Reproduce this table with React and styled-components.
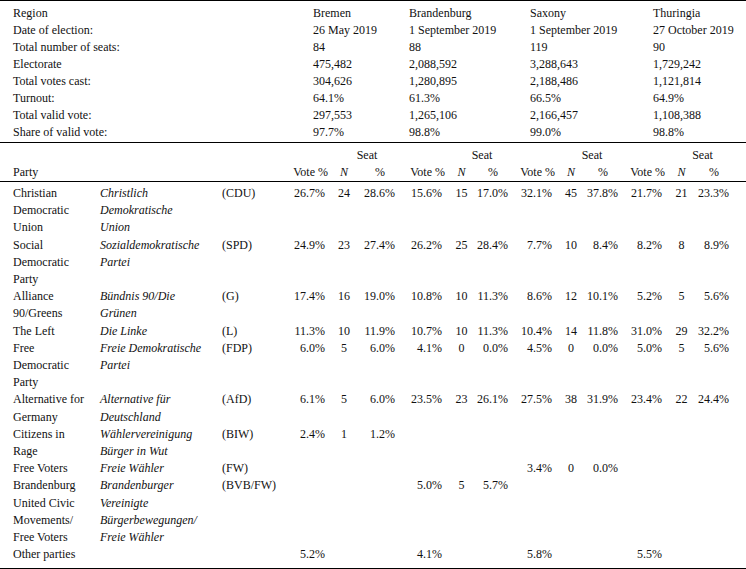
import { Fragment } from "react";
import styled, { createGlobalStyle } from "styled-components";

const GlobalStyle = createGlobalStyle`
  html, body {
    margin: 0;
    padding: 0;
    background: #fff;
  }
  body {
    font-family: "Liberation Serif", "Times New Roman", serif;
    font-size: 12px;
    color: #111;
  }
`;

const REGIONS = ["Bremen", "Brandenburg", "Saxony", "Thuringia"];

const SUMMARY = [
  ["Region", ...REGIONS],
  ["Date of election:", "26 May 2019", "1 September 2019", "1 September 2019", "27 October 2019"],
  ["Total number of seats:", "84", "88", "119", "90"],
  ["Electorate", "475,482", "2,088,592", "3,288,643", "1,729,242"],
  ["Total votes cast:", "304,626", "1,280,895", "2,188,486", "1,121,814"],
  ["Turnout:", "64.1%", "61.3%", "66.5%", "64.9%"],
  ["Total valid vote:", "297,553", "1,265,106", "2,166,457", "1,108,388"],
  ["Share of valid vote:", "97.7%", "98.8%", "99.0%", "98.8%"],
];

// each region: [vote %, seats, seat %] or null
const PARTIES = [
  {
    name: "Christian Democratic Union",
    german: "Christlich Demokratische Union",
    abbr: "(CDU)",
    results: [
      ["26.7%", "24", "28.6%"],
      ["15.6%", "15", "17.0%"],
      ["32.1%", "45", "37.8%"],
      ["21.7%", "21", "23.3%"],
    ],
  },
  {
    name: "Social Democratic Party",
    german: "Sozialdemokratische Partei",
    abbr: "(SPD)",
    results: [
      ["24.9%", "23", "27.4%"],
      ["26.2%", "25", "28.4%"],
      ["7.7%", "10", "8.4%"],
      ["8.2%", "8", "8.9%"],
    ],
  },
  {
    name: "Alliance 90/\u2060Greens",
    german: "Bündnis 90/\u2060Die Grünen",
    abbr: "(G)",
    results: [
      ["17.4%", "16", "19.0%"],
      ["10.8%", "10", "11.3%"],
      ["8.6%", "12", "10.1%"],
      ["5.2%", "5", "5.6%"],
    ],
  },
  {
    name: "The Left",
    german: "Die Linke",
    abbr: "(L)",
    results: [
      ["11.3%", "10", "11.9%"],
      ["10.7%", "10", "11.3%"],
      ["10.4%", "14", "11.8%"],
      ["31.0%", "29", "32.2%"],
    ],
  },
  {
    name: "Free Democratic Party",
    german: "Freie Demokratische Partei",
    abbr: "(FDP)",
    results: [
      ["6.0%", "5", "6.0%"],
      ["4.1%", "0", "0.0%"],
      ["4.5%", "0", "0.0%"],
      ["5.0%", "5", "5.6%"],
    ],
  },
  {
    name: "Alternative for Germany",
    german: "Alternative für Deutschland",
    abbr: "(AfD)",
    results: [
      ["6.1%", "5", "6.0%"],
      ["23.5%", "23", "26.1%"],
      ["27.5%", "38", "31.9%"],
      ["23.4%", "22", "24.4%"],
    ],
  },
  {
    name: "Citizens in Rage",
    german: "Wählervereinigung Bürger in Wut",
    abbr: "(BIW)",
    results: [["2.4%", "1", "1.2%"], null, null, null],
  },
  {
    name: "Free Voters",
    german: "Freie Wähler",
    abbr: "(FW)",
    results: [null, null, ["3.4%", "0", "0.0%"], null],
  },
  {
    name: "Brandenburg United Civic Movements/ Free Voters",
    german: "Brandenburger Vereinigte Bürgerbewegungen/ Freie Wähler",
    abbr: "(BVB/FW)",
    results: [null, ["5.0%", "5", "5.7%"], null, null],
  },
];

const OTHERS = ["5.2%", "4.1%", "5.8%", "5.5%"];

const Page = styled.div`
  width: 746px;
`;

const Summary = styled.div`
  display: grid;
  grid-template-columns: 313px 96px 121px 123px 1fr;
  border-top: 1px solid #000;
  border-bottom: 1px solid #000;
  padding: 4px 0 1px;
  line-height: 17px;
`;

const SummaryCell = styled.div`
  padding-left: ${(p) => (p.$label ? "13px" : "0")};
  white-space: nowrap;
`;

const COLUMNS =
  "100px 122px 61px 50px 22px 46px 49px 23px 41px 46px 22px 42px 46px 23px 42px 1fr";

const ResultsHead = styled.div`
  display: grid;
  grid-template-columns: ${COLUMNS};
  padding-top: 4px;
  border-bottom: 1px solid #000;
  line-height: 17px;
`;

const ResultsBody = styled.div`
  display: grid;
  grid-template-columns: ${COLUMNS};
  padding: 3px 0 5px;
  border-bottom: 1px solid #000;
  line-height: 17.2px;
`;

const Blank = styled.div`
  grid-column: span ${(p) => p.$span || 1};
`;

const PartyCell = styled.div`
  padding: 0 10px 0 13px;
`;

const GermanCell = styled.div`
  font-style: italic;
  padding-right: 17px;
`;

const AbbrCell = styled.div`
  white-space: nowrap;
`;

const SeatHead = styled.div`
  grid-column: span 2;
  text-align: center;
`;

const VoteHead = styled.div`
  text-align: right;
  padding-right: 5px;
  white-space: nowrap;
`;

const NHead = styled.div`
  text-align: center;
  font-style: italic;
`;

const PctHead = styled.div`
  text-align: right;
  padding-right: 16px;
`;

const PAD = { vote: "8px", n: "0", pct: "6px" };

const Value = styled.div`
  white-space: nowrap;
  text-align: ${(p) => (p.$kind === "n" ? "center" : "right")};
  padding-right: ${(p) => PAD[p.$kind]};
`;

function RegionCells({ result }) {
  if (!result) {
    return (
      <>
        <Blank />
        <Blank />
        <Blank />
      </>
    );
  }
  const [vote, seats, pct] = result;
  return (
    <>
      <Value $kind="vote">{vote}</Value>
      <Value $kind="n">{seats}</Value>
      <Value $kind="pct">{pct}</Value>
    </>
  );
}

export default function App() {
  return (
    <Page>
      <GlobalStyle />
      <Summary>
        {SUMMARY.map((row) =>
          row.map((cell, i) => (
            <SummaryCell key={row[0] + i} $label={i === 0}>
              {cell}
            </SummaryCell>
          ))
        )}
      </Summary>

      <ResultsHead>
        <Blank $span={3} />
        {REGIONS.map((r) => (
          <Fragment key={r}>
            <Blank />
            <SeatHead>Seat</SeatHead>
          </Fragment>
        ))}
        <Blank />

        <PartyCell>Party</PartyCell>
        <Blank />
        <Blank />
        {REGIONS.map((r) => (
          <Fragment key={r}>
            <VoteHead>Vote %</VoteHead>
            <NHead>N</NHead>
            <PctHead>%</PctHead>
          </Fragment>
        ))}
        <Blank />
      </ResultsHead>

      <ResultsBody>
        {PARTIES.map((p) => (
          <Fragment key={p.abbr}>
            <PartyCell>{p.name}</PartyCell>
            <GermanCell>{p.german}</GermanCell>
            <AbbrCell>{p.abbr}</AbbrCell>
            {p.results.map((res, i) => (
              <RegionCells key={i} result={res} />
            ))}
            <Blank />
          </Fragment>
        ))}

        <PartyCell>Other parties</PartyCell>
        <Blank />
        <Blank />
        {OTHERS.map((v) => (
          <Fragment key={v}>
            <Value $kind="vote">{v}</Value>
            <Blank />
            <Blank />
          </Fragment>
        ))}
        <Blank />
      </ResultsBody>
    </Page>
  );
}
